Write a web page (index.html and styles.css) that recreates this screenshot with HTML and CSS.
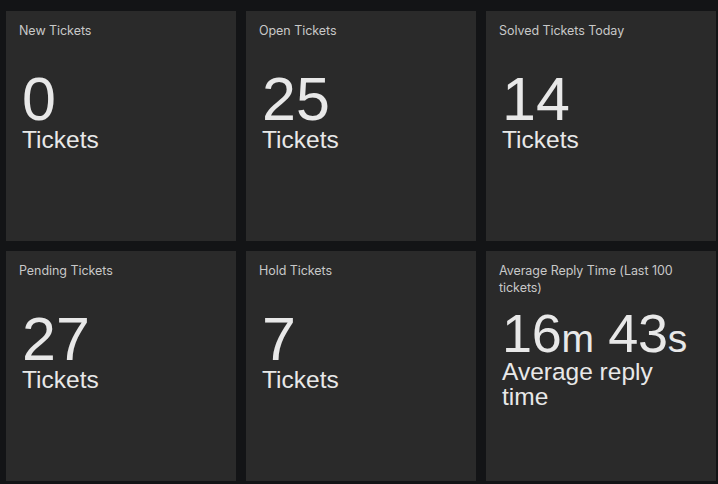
FILE: index.html
```html
<!DOCTYPE html>
<html>
<head>
<meta charset="utf-8">
<link rel="stylesheet" href="styles.css">
</head>
<body>
<div class="grid">
  <div class="tile">
    <div class="title">New Tickets</div>
    <div class="value">
      <div class="number">0</div>
      <div class="label">Tickets</div>
    </div>
  </div>
  <div class="tile">
    <div class="title">Open Tickets</div>
    <div class="value">
      <div class="number">25</div>
      <div class="label">Tickets</div>
    </div>
  </div>
  <div class="tile">
    <div class="title">Solved Tickets Today</div>
    <div class="value">
      <div class="number">14</div>
      <div class="label">Tickets</div>
    </div>
  </div>
  <div class="tile">
    <div class="title">Pending Tickets</div>
    <div class="value">
      <div class="number">27</div>
      <div class="label">Tickets</div>
    </div>
  </div>
  <div class="tile">
    <div class="title">Hold Tickets</div>
    <div class="value">
      <div class="number">7</div>
      <div class="label">Tickets</div>
    </div>
  </div>
  <div class="tile">
    <div class="title">Average Reply Time (Last 100 tickets)</div>
    <div class="value value-compact">
      <div class="number number-time">16<span class="unit">m</span> 43<span class="unit">s</span></div>
      <div class="label label-wrap">Average reply time</div>
    </div>
  </div>
</div>
</body>
</html>
```
FILE: styles.css
```css
html, body {
  margin: 0;
  padding: 0;
  background: #131416;
}
body {
  padding: 11px 2px 0 6px;
  height: 484px;
  box-sizing: border-box;
  overflow: hidden;
}
.grid {
  display: grid;
  grid-template-columns: repeat(3, 230px);
  grid-auto-rows: 230px;
  gap: 10px;
}
.tile {
  background: #2a2a2a;
  padding: 11px 13px;
  box-sizing: border-box;
  display: flex;
  flex-direction: column;
}
.title {
  font-family: Inter, "Noto Sans", sans-serif;
  font-size: 12.5px;
  letter-spacing: -0.05px;
  line-height: 17px;
  color: #c8c8c8;
}
.value {
  margin-top: 31px;
  padding-left: 3px;
  color: #e8e8e8;
  font-family: "Liberation Sans", Arial, sans-serif;
}
.number {
  font-size: 61px;
  line-height: 58px;
}
.label {
  font-size: 24.5px;
  line-height: 24px;
  padding-right: 3px;
}
.value-compact {
  margin-top: 12px;
}
.number-time {
  font-size: 54px;
  line-height: 50px;
  letter-spacing: -0.3px;
}
.unit {
  font-size: 39px;
  line-height: 0;
}
.label-wrap {
  margin-top: 2px;
  line-height: 24.5px;
}
```
